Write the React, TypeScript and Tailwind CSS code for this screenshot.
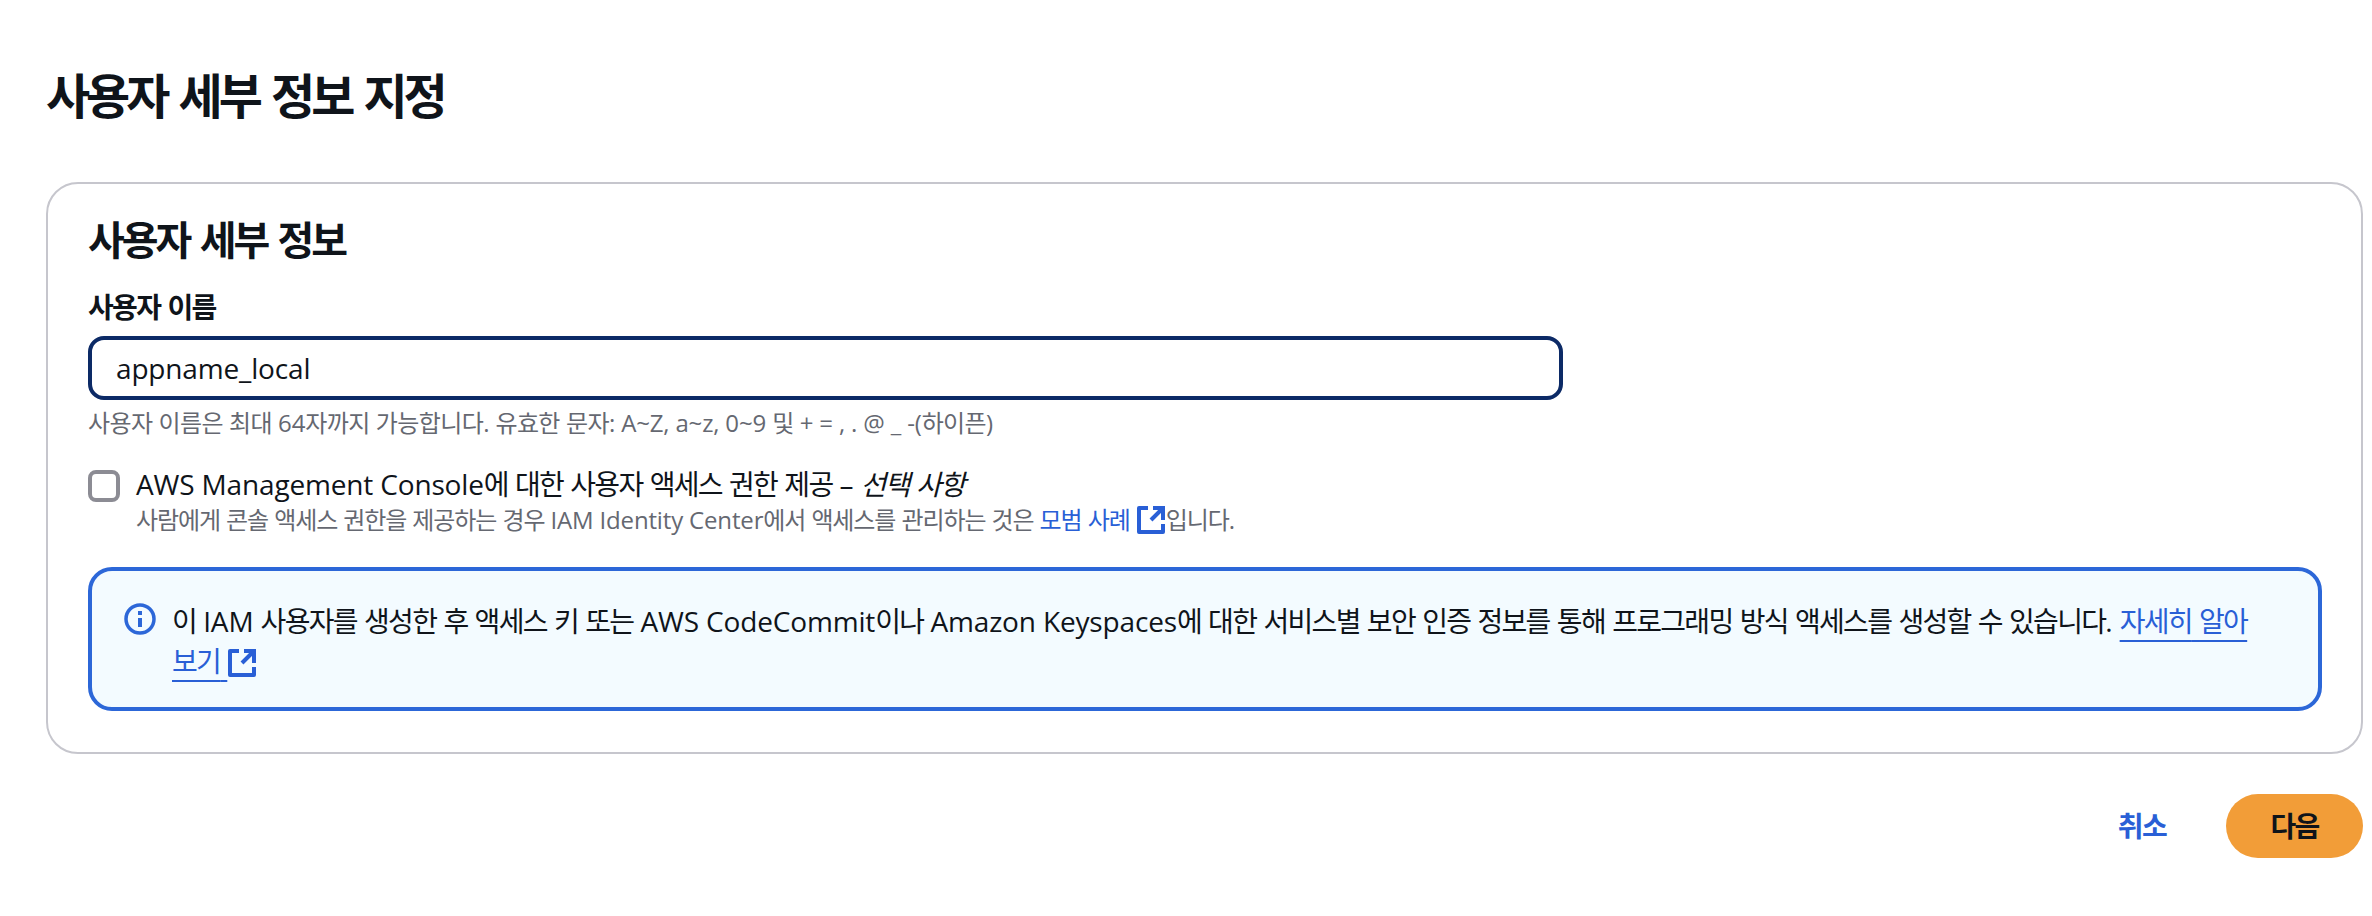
import React from "react";

const font = { fontFamily: '"Open Sans","Noto Sans CJK KR",sans-serif' };

function K({ t, c = "tracking-[-0.06em]" }: { t: string; c?: string }) {
  const parts = t.split(/([\uAC00-\uD7A3]+)/);
  return (
    <>
      {parts.map((p, i) =>
        i % 2 === 1 ? (
          <span key={i} className={c}>{p}</span>
        ) : (
          <React.Fragment key={i}>{p}</React.Fragment>
        )
      )}
    </>
  );
}

function Ext() {
  return (
    <svg viewBox="0 0 28 28" className="inline-block w-[28px] h-[28px] mx-[1px] align-[-5px]" fill="none" stroke="currentColor" strokeWidth="4">
      <path d="M11 2H2v24h24v-8" strokeLinejoin="round" />
      <path d="M14 14L25 3" />
      <path d="M16 2h10v12" />
    </svg>
  );
}

export default function App() {
  return (
    <div className="bg-white w-[2372px] h-[916px] overflow-hidden pl-[46px] pr-[9px] pt-[66px] text-[#0f141a] tracking-[-0.01em]" style={font}>
      <h1 className="text-[48px] leading-[60px] font-bold mb-[56px]"><K t="사용자 세부 정보 지정" c="tracking-[-0.085em]" /></h1>
      <div className="border-2 border-[#c6c6cd] rounded-[32px] h-[572px] pl-[40px] pr-[40px] pt-[28px]">
        <h2 className="text-[40px] leading-[56px] font-bold"><K t="사용자 세부 정보" c="tracking-[-0.075em]" /></h2>
        <label className="block mt-[19px] text-[28px] leading-[40px] font-bold"><K t="사용자 이름" /></label>
        <div className="mt-[9px] w-[1475px] h-[64px] border-[4px] border-[#0c2a66] rounded-[16px] flex items-center pl-[24px] text-[28px]">appname_local</div>
        <p className="mt-[3px] text-[24px] leading-[40px] text-[#656871]"><K t="사용자 이름은 최대 64자까지 가능합니다. 유효한 문자: A~Z, a~z, 0~9 및 + = , . @ _ -(하이픈)" c="tracking-[-0.025em]" /></p>
        <div className="mt-[21px] flex">
          <div className="w-[32px] h-[32px] mt-[6px] border-[4px] border-[#8c8c94] rounded-[8px] shrink-0" />
          <div className="ml-[16px]">
            <div className="text-[28px] leading-[40px]"><K t="AWS Management Console에 대한 사용자 액세스 권한 제공 – " /><i><K t="선택 사항" /></i></div>
            <div className="text-[24px] leading-[32px] text-[#656871]"><K t="사람에게 콘솔 액세스 권한을 제공하는 경우 IAM Identity Center에서 액세스를 관리하는 것은 " c="tracking-[-0.045em]" /><span className="text-[#295fd6]"><K t="모범 사례" c="tracking-[-0.045em]" /> <Ext /></span><K t="입니다." c="tracking-[-0.045em]" /></div>
          </div>
        </div>
        <div className="mt-[31px] w-[2234px] h-[144px] border-[4px] border-[#2c67d8] rounded-[24px] bg-[#f3fbff] flex pl-[32px] pr-[60px] pt-[30px]">
          <svg viewBox="0 0 32 32" className="w-[32px] h-[32px] mt-[2px] shrink-0 text-[#2c67d8]" fill="none" stroke="currentColor" strokeWidth="3.5">
            <circle cx="16" cy="16" r="14" />
            <path d="M16 15v9" strokeWidth="4" />
            <path d="M16 8v4" strokeWidth="4" />
          </svg>
          <p className="ml-[16px] text-[28px] leading-[40px]"><K t="이 IAM 사용자를 생성한 후 액세스 키 또는 AWS CodeCommit이나 Amazon Keyspaces에 대한 서비스별 보안 인증 정보를 통해 프로그래밍 방식 액세스를 생성할 수 있습니다. " /><a className="text-[#295fd6] underline underline-offset-[8px] decoration-2"><K t="자세히 알아" /> <K t="보기" /> </a><span className="text-[#295fd6]"><Ext /></span></p>
        </div>
      </div>
      <div className="mt-[40px] flex justify-end items-center">
        <span className="text-[28px] font-bold text-[#295fd6] mr-[60px]"><K t="취소" /></span>
        <button className="w-[137px] h-[64px] rounded-[32px] bg-[#f29d38] text-[28px] font-bold text-[#0f141a]"><K t="다음" /></button>
      </div>
    </div>
  );
}
